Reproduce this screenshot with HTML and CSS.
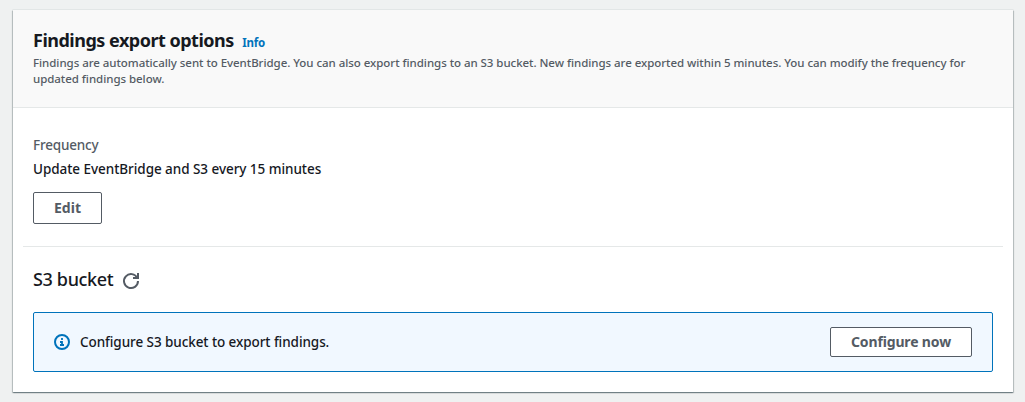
FILE: index.html
```html
<!DOCTYPE html>
<html lang="en">
<head>
<meta charset="utf-8">
<title>Findings export options</title>
<link rel="stylesheet" href="styles.css">
</head>
<body>
<section class="card">
  <header class="card-header">
    <div class="title-row">
      <h2 class="title">Findings export options</h2>
      <a class="info-link">Info</a>
    </div>
    <p class="description">Findings are automatically sent to EventBridge. You can also export findings to an S3 bucket. New findings are exported within 5 minutes. You can modify the frequency for updated findings below.</p>
  </header>
  <div class="frequency">
    <div class="label">Frequency</div>
    <div class="value">Update EventBridge and S3 every 15 minutes</div>
    <button class="button edit"><span class="edit-text">Edit</span></button>
  </div>
  <div class="bucket">
    <div class="bucket-heading">
      <h3 class="bucket-title">S3 bucket</h3>
      <svg class="refresh" viewBox="0 0 16 16"><path d="M10 5h5V0"/><path d="M15 8a7 7 0 1 1-.7-3"/></svg>
    </div>
    <div class="alert">
      <svg class="info-icon" viewBox="0 0 16 16"><circle cx="8" cy="8" r="7"/><path d="M8 11V8H6M10 11H6M8 6V4"/></svg>
      <span class="alert-text">Configure S3 bucket to export findings.</span>
      <button class="button configure"><span class="configure-text">Configure now</span></button>
    </div>
  </div>
</section>
</body>
</html>
```
FILE: styles.css
```css
* { box-sizing: border-box; }
body {
  margin: 0;
  padding: 10px 12px 10px 13px;
  height: 402px;
  background: #eff1f1;
  color: #16191f;
  font-family: "Noto Sans", "Open Sans", sans-serif;
  font-size: 13.5px;
  font-weight: 500;
}
h2, h3, p { margin: 0; }
.card {
  height: 382px;
  background: #fff;
  box-shadow: 0 1px 1px 0 rgba(0, 28, 36, .3), 1px 1px 1px 0 rgba(0, 28, 36, .15), -1px 1px 1px 0 rgba(0, 28, 36, .15), 0 0 0 .5px #d5dbdb;
}
.card-header {
  height: 98px;
  padding: 18px 20px 0;
  background: #f9f9f9;
  border-bottom: 1px solid #e5e8e8;
}
.title-row { display: flex; align-items: baseline; gap: 8.5px; height: 27px; }
.title { font-size: 18px; line-height: 24px; font-weight: 700; letter-spacing: -.5px; white-space: nowrap; }
.info-link { color: #0073bb; font-size: 11.5px; line-height: 16px; font-weight: 700; letter-spacing: -.2px; }
.description { color: #545b64; font-size: 11.5px; line-height: 16px; letter-spacing: -.045px; }
.frequency {
  height: 139px;
  margin: 0 10px;
  padding: 26px 10px 0;
  border-bottom: 1px solid #e5e8e8;
}
.label { color: #545b64; line-height: 22px; letter-spacing: -.2px; }
.value { margin-top: 2px; line-height: 22px; letter-spacing: -.05px; }
.button {
  display: flex;
  align-items: center;
  justify-content: center;
  padding: 0;
  background: #fff;
  border: 1px solid #545b64;
  border-radius: 2px;
  color: #545b64;
  font: 700 14px/20px "Noto Sans", "Open Sans", sans-serif;
  white-space: nowrap;
}
.edit { width: 69px; height: 32px; margin-top: 12px; }
.bucket { padding: 18px 20px 0; }
.bucket-heading { display: flex; align-items: center; height: 28px; }
.bucket-title { width: 90px; font-size: 18px; line-height: 28px; font-weight: 500; letter-spacing: -.35px; white-space: nowrap; }
.refresh { width: 16px; height: 16px; margin-top: 4px; fill: none; stroke: #545b64; stroke-width: 2; overflow: visible; }
.alert {
  display: flex;
  align-items: center;
  height: 60px;
  margin-top: 19px;
  padding: 0 20px;
  background: #f1f8ff;
  border: 1px solid #0073bb;
  border-radius: 2px;
}
.info-icon { width: 16px; height: 16px; margin-right: 10px; fill: none; stroke: #0073bb; stroke-width: 2; }
.info-icon path { stroke-width: 1.8; }
.alert-text { letter-spacing: -.075px; }
.configure { width: 142px; height: 30px; margin-left: auto; letter-spacing: -.15px; }
```
